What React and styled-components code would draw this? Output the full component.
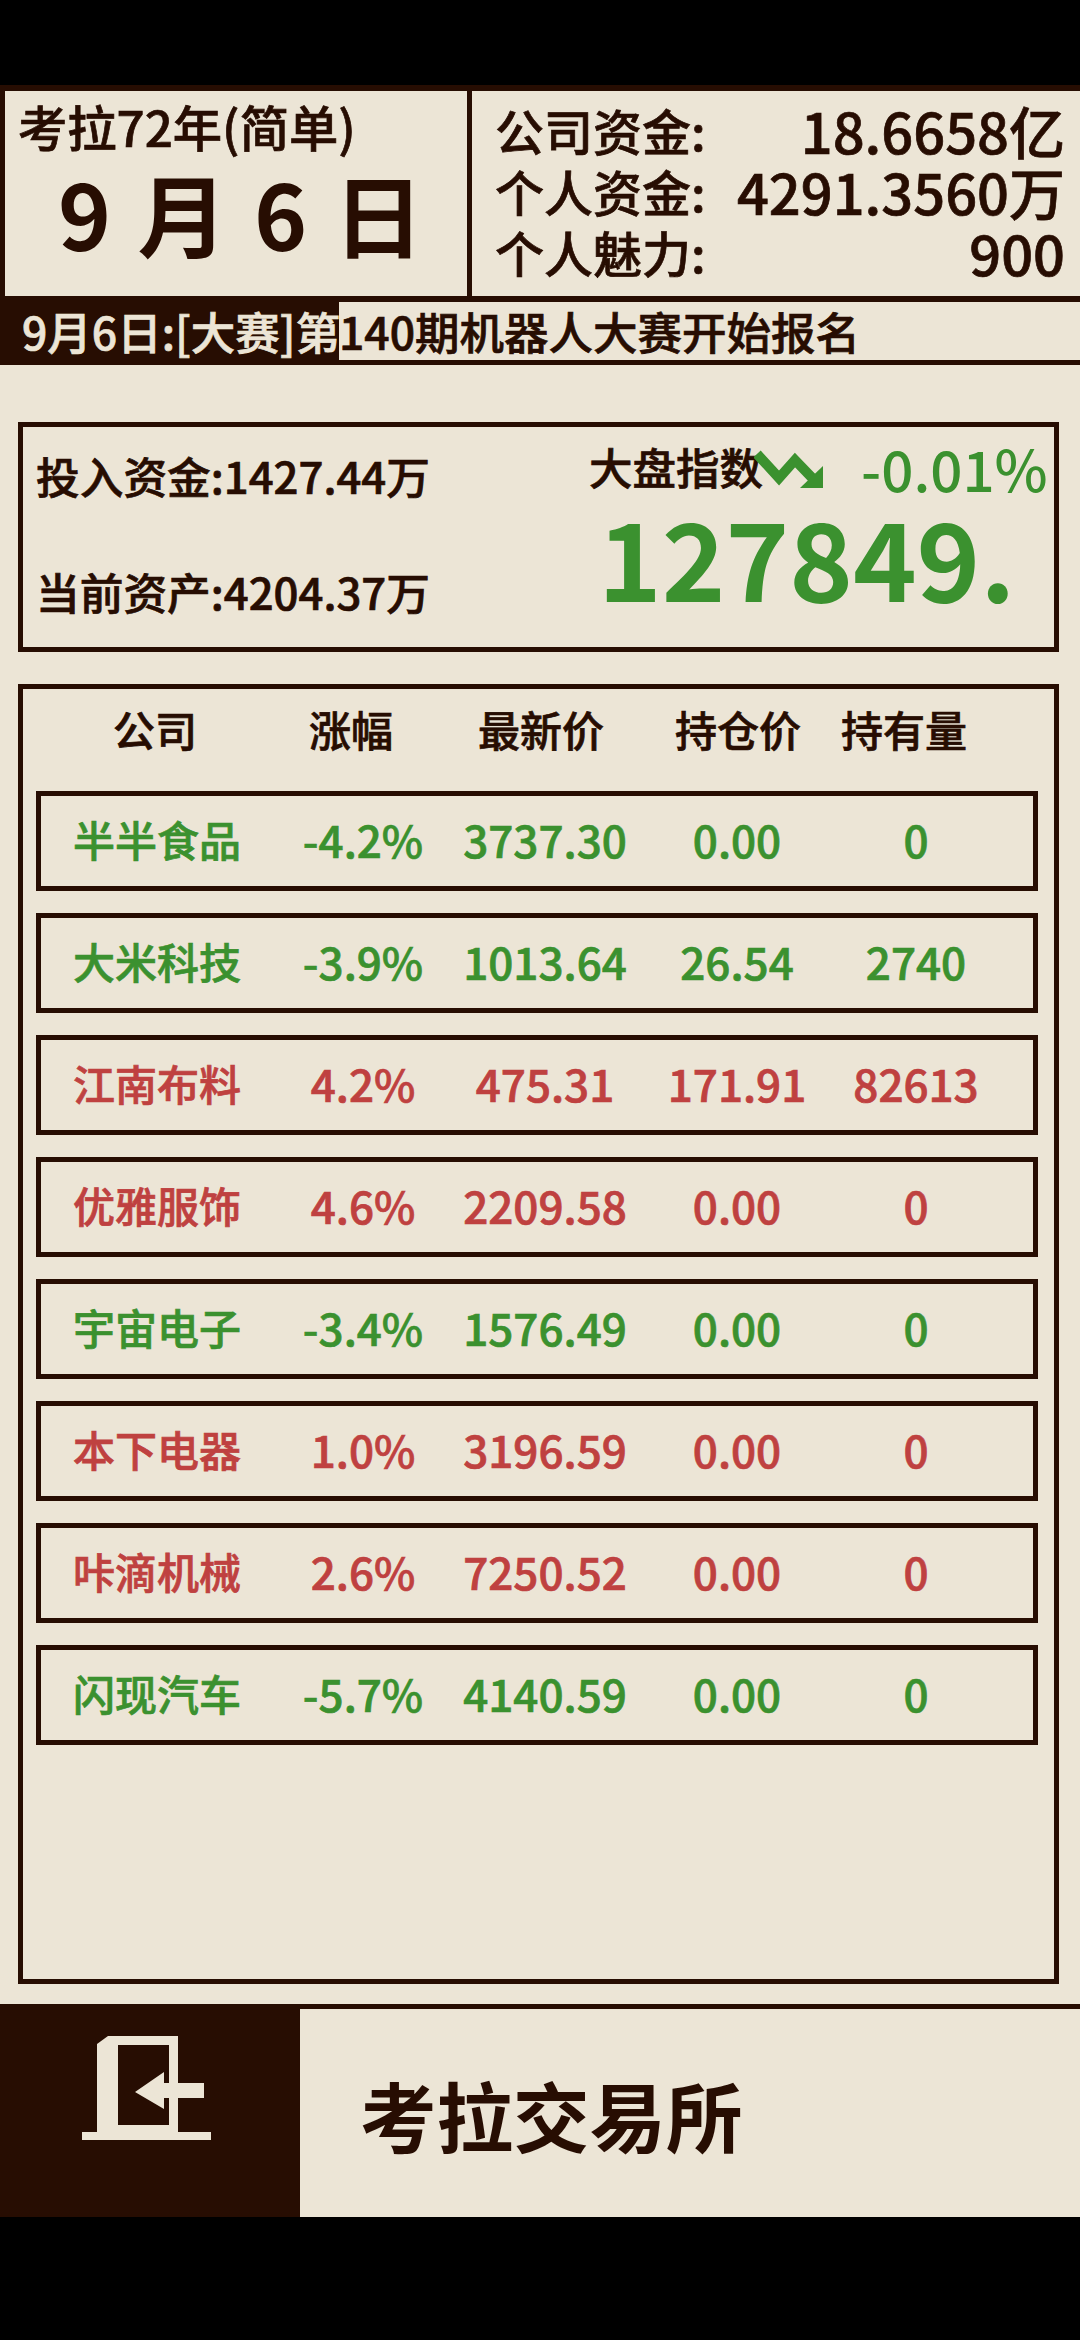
import React from "react";
import styled, { createGlobalStyle } from "styled-components";

const INK = "#270d02";
const PAPER = "#ece5d6";
const GREEN = "#3b912f";
const RED = "#bf4140";

// reference text sits a touch heavier than the medium cut
const MEDIUM = "font-weight: 500; -webkit-text-stroke: 0.7px currentColor;";

const stocks = [
  ["半半食品", "-4.2%", "3737.30", "0.00", "0"],
  ["大米科技", "-3.9%", "1013.64", "26.54", "2740"],
  ["江南布料", "4.2%", "475.31", "171.91", "82613"],
  ["优雅服饰", "4.6%", "2209.58", "0.00", "0"],
  ["宇宙电子", "-3.4%", "1576.49", "0.00", "0"],
  ["本下电器", "1.0%", "3196.59", "0.00", "0"],
  ["咔滴机械", "2.6%", "7250.52", "0.00", "0"],
  ["闪现汽车", "-5.7%", "4140.59", "0.00", "0"],
];

export default function App() {
  return (
    <Screen>
      <GlobalStyle />
      <Panel>
        <TopBar>
          <DateCell>
            <Season>考拉72年(简单)</Season>
            <DateText>9 月 6 日</DateText>
          </DateCell>
          <FundsCell>
            <FundRow>
              <span>公司资金:</span>
              <FundValue>18.6658亿</FundValue>
            </FundRow>
            <FundRow>
              <span>个人资金:</span>
              <FundValue>4291.3560万</FundValue>
            </FundRow>
            <FundRow>
              <span>个人魅力:</span>
              <FundValue>900</FundValue>
            </FundRow>
          </FundsCell>
        </TopBar>

        <Ticker>
          <TickerHead>9月6日:[大赛]第</TickerHead>
          <TickerRest>140期机器人大赛开始报名</TickerRest>
        </Ticker>

        <Content>
          <Summary>
            <Assets>
              <AssetLine>投入资金:1427.44万</AssetLine>
              <AssetLine>当前资产:4204.37万</AssetLine>
            </Assets>
            <Market>
              <MarketTop>
                <MarketLabel>大盘指数</MarketLabel>
                <TrendIcon viewBox="0 0 72 44">
                  <path d="M3 6 L25 30 L41 12 L64 36" fill="none" stroke={GREEN} strokeWidth="10" />
                  <path d="M69 18 V40 H46 Z" fill={GREEN} />
                </TrendIcon>
                <MarketChange>-0.01%</MarketChange>
              </MarketTop>
              <MarketIndex>127849.</MarketIndex>
            </Market>
          </Summary>

          <Table>
            <TableHead>
              <span>公司</span>
              <span>涨幅</span>
              <span>最新价</span>
              <span>持仓价</span>
              <span>持有量</span>
            </TableHead>
            <Rows>
              {stocks.map((s) => (
                <StockRow key={s[0]} $up={!s[1].startsWith("-")}>
                  {s.map((v, i) => (
                    <span key={i}>{v}</span>
                  ))}
                </StockRow>
              ))}
            </Rows>
          </Table>
        </Content>

        <Footer>
          <BackButton>
            <svg width="129" height="104" viewBox="0 0 129 104">
              <path
                fillRule="evenodd"
                fill={PAPER}
                d="M15 96 V8 L26 0 H96 V96 H129 V104 H0 V96 Z M36 9 V89 H87 V9 Z"
              />
              <path fill={PAPER} d="M53 56 L82 36 V47 H122 V62 H82 V73 Z" />
            </svg>
          </BackButton>
          <FooterTitle>考拉交易所</FooterTitle>
        </Footer>
      </Panel>
    </Screen>
  );
}

// Styled components
const GlobalStyle = createGlobalStyle`
  html, body {
    margin: 0;
    padding: 0;
    background: #000;
  }
  * {
    box-sizing: border-box;
  }
`;

const Screen = styled.div`
  width: 1080px;
  height: 2340px;
  padding: 85px 0 123px;
  background: #000;
  font-family: "Noto Sans CJK SC", "Noto Sans", sans-serif;
  color: ${INK};
`;

const Panel = styled.div`
  height: 2132px;
  display: flex;
  flex-direction: column;
  background: ${PAPER};
`;

const TopBar = styled.div`
  height: 211px;
  display: flex;
  gap: 5px;
  padding: 6px 0 0 5px;
  background: ${INK};
`;

const DateCell = styled.div`
  width: 462px;
  padding: 0 0 0 13px;
  background: ${PAPER};
`;

const Season = styled.div`
  font-size: 49.3px;
  ${MEDIUM}
  line-height: 72px;
  margin-top: -1px;
`;

const DateText = styled.div`
  font-size: 90px;
  font-weight: 700;
  line-height: 100px;
  margin: 0 0 0 40px;
  word-spacing: 6px;
`;

const FundsCell = styled.div`
  flex: 1;
  padding: 8px 15px 0 23px;
  background: ${PAPER};
`;

const FundRow = styled.div`
  height: 61px;
  display: flex;
  justify-content: space-between;
  align-items: center;
  font-size: 49px;
  line-height: 1;
  ${MEDIUM}
`;

const FundValue = styled.span`
  font-size: 56px;
`;

const Ticker = styled.div`
  height: 69px;
  display: flex;
  border-top: 6px solid ${INK};
  border-bottom: 5px solid ${INK};
  font-size: 44.5px;
  line-height: 58px;
  white-space: nowrap;
  ${MEDIUM}
`;

const TickerHead = styled.div`
  width: 339px;
  padding-left: 22px;
  overflow: hidden;
  background: ${INK};
  color: ${PAPER};
`;

const TickerRest = styled.div`
  flex: 1;
`;

const Content = styled.div`
  flex: 1;
  display: flex;
  flex-direction: column;
  gap: 32px;
  padding: 57px 21px 20px 18px;
`;

const Summary = styled.div`
  height: 230px;
  display: flex;
  justify-content: space-between;
  border: 5px solid ${INK};
`;

const Assets = styled.div`
  display: flex;
  flex-direction: column;
  gap: 53px;
  padding: 17px 0 0 13px;
`;

const AssetLine = styled.div`
  font-size: 43.7px;
  ${MEDIUM}
  line-height: 63px;
`;

const Market = styled.div`
  width: 465px;
  padding-top: 12px;
`;

const MarketTop = styled.div`
  display: flex;
  align-items: center;
  height: 56px;
  line-height: 1;
`;

const MarketLabel = styled.span`
  font-size: 43.5px;
  ${MEDIUM}
`;

const TrendIcon = styled.svg`
  width: 72px;
  height: 44px;
  margin: 6px 0 0 -9px;
`;

const MarketChange = styled.span`
  margin-left: 35px;
  font-size: 56.5px;
  font-weight: 500;
  color: ${GREEN};
`;

const MarketIndex = styled.div`
  margin: 0 0 0 9px;
  font-size: 108px;
  font-weight: 700;
  line-height: 120px;
  color: ${GREEN};
`;

const Table = styled.div`
  flex: 1;
  border: 5px solid ${INK};
  padding: 0 16px 0 13px;
`;

const TableHead = styled.div`
  display: grid;
  grid-template-columns: 251px 128px 252px 142px 190px;
  height: 102px;
  padding-bottom: 24px;
  align-items: center;
  text-align: center;
  font-size: 42px;
  ${MEDIUM}

  span:first-child {
    margin-left: -13px;
  }
`;

const Rows = styled.div`
  display: flex;
  flex-direction: column;
  gap: 22px;
`;

const StockRow = styled.div`
  height: 100px;
  display: grid;
  grid-template-columns: 232px 180px 184px 200px 158px;
  align-items: center;
  text-align: center;
  padding-bottom: 5px;
  border: 5px solid ${INK};
  font-size: 44px;
  ${MEDIUM}
  color: ${(p) => (p.$up ? RED : GREEN)};

  span:first-child {
    font-size: 42px;
  }
`;

const Footer = styled.div`
  height: 213px;
  display: flex;
  border-top: 5px solid ${INK};
`;

const BackButton = styled.div`
  width: 300px;
  display: flex;
  align-items: flex-start;
  padding: 27px 0 0 82px;
  background: ${INK};
`;

const FooterTitle = styled.div`
  align-self: center;
  margin-left: 60px;
  font-size: 76.5px;
  font-weight: 700;
`;
